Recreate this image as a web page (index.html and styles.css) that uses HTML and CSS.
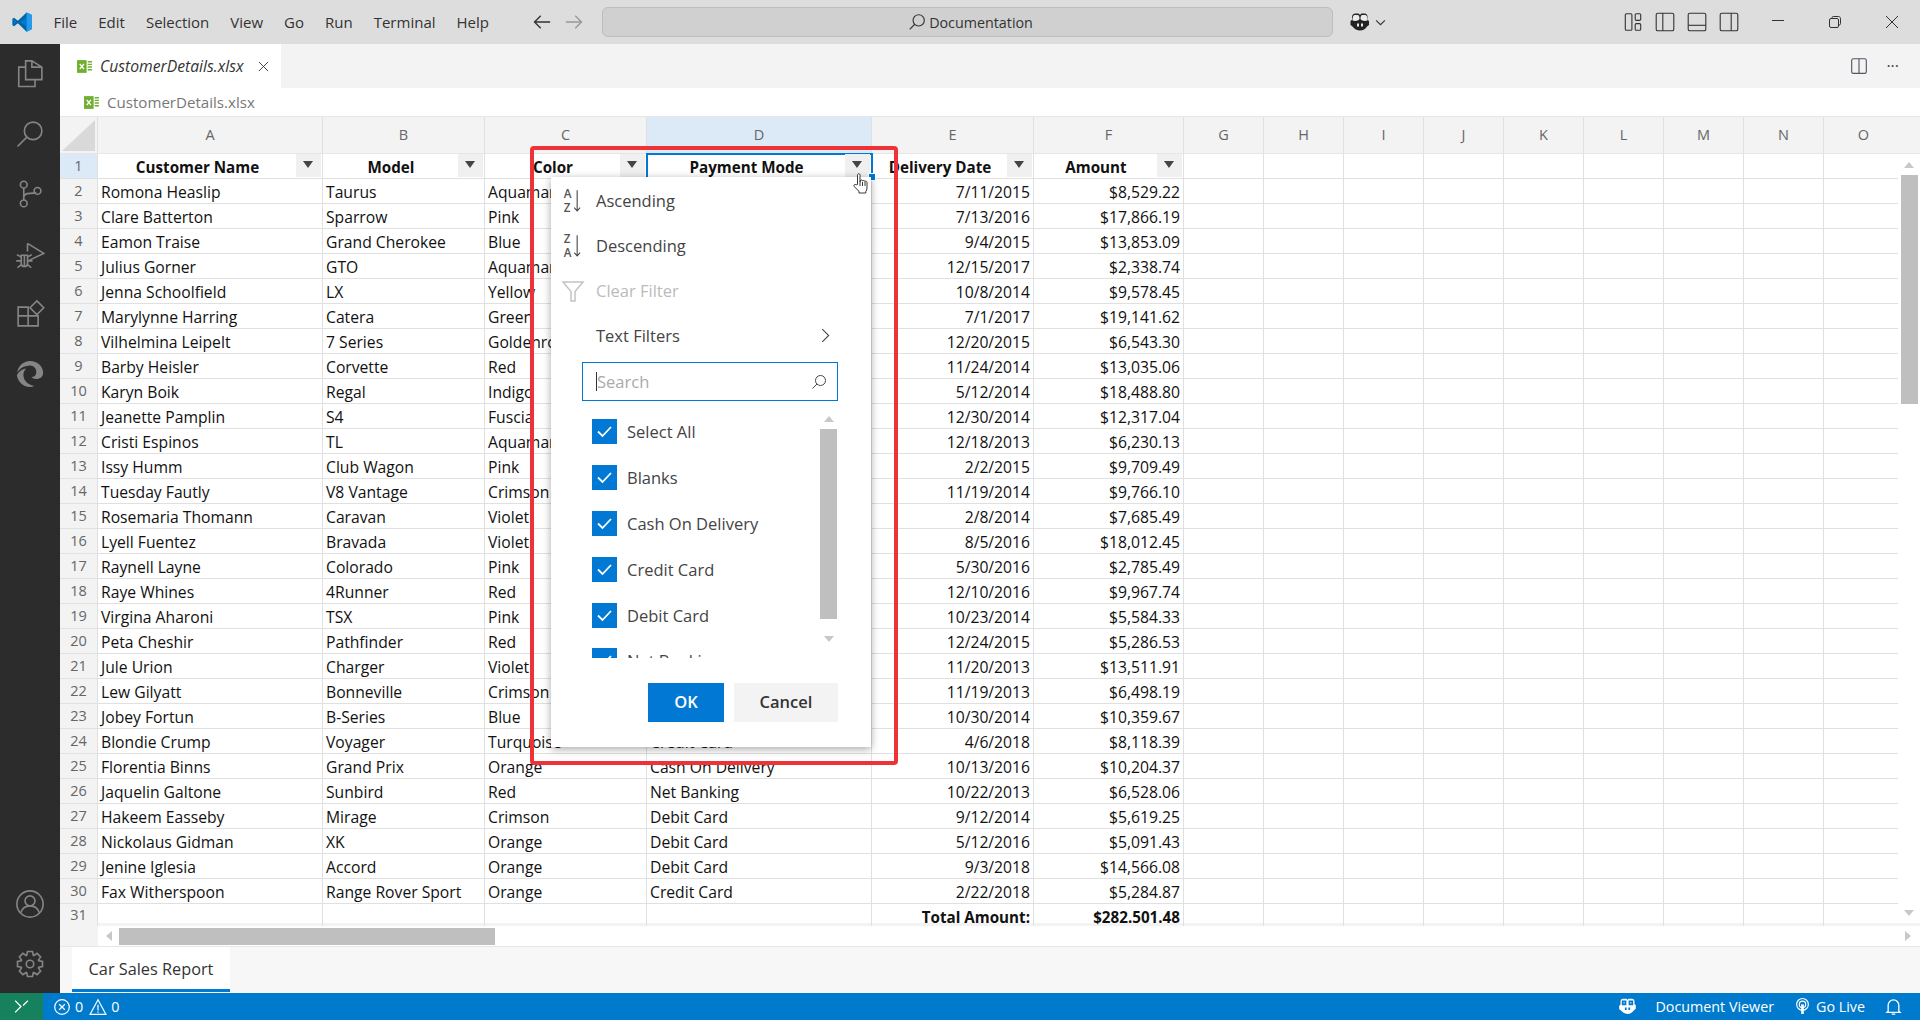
FILE: index.html
```html
<!DOCTYPE html>
<html lang="en">
<head>
    <meta charset="UTF-8">
    <title>CustomerDetails.xlsx</title>
    <link rel="stylesheet" href="styles.css">
</head>
<body>
<div class="app">
    <div class="titlebar">
        <svg class="logo" viewBox="0 0 24 24"><path fill="#0065a9" d="M17 1.500 22.500 4v16L17 22.500 7.500 13.400 3.400 16.600 1.500 15.600V8.400l1.900-1 4.100 3.200z"/><path fill="#007acc" d="M17 7.200 10.400 12 17 16.800zM3.400 9.300V14.700L6 12z"/><path fill="#1f9cf0" d="M17 1.500 22.500 4v16L17 22.500z"/></svg>
        <div class="menu"><span>File</span><span>Edit</span><span>Selection</span><span>View</span><span>Go</span><span>Run</span><span>Terminal</span><span>Help</span></div>
        <div class="nav">
            <svg viewBox="0 0 16 16"><path d="M14.500 8H2M7 3 2 8l5 5"/></svg>
            <svg class="off" viewBox="0 0 16 16"><path d="M1.500 8H14M9 3l5 5-5 5"/></svg>
        </div>
        <div class="command">
            <svg viewBox="0 0 16 16"><circle cx="9.500" cy="6.500" r="5"/><path d="M6 10 1.500 14.500"/></svg>
            <span>Documentation</span>
        </div>
        <div class="copilot">
            <svg viewBox="0 0 24 24"><path class="cp" d="M7.500 3.500h2.300c1 0 1.700.6 2.200 1.500.5-.9 1.200-1.500 2.200-1.500h2.300c2 0 3 1.300 3 3.200v3l1.500 1.300v4l-2 1.500C17.500 19 15 20.500 12 20.500S6.500 19 4.500 16.500l-2-1.500v-4L4 9.700v-3c0-1.900 1.500-3.200 3.500-3.200z"/><path class="cp-eye" d="M4.500 10.500c2 .8 5.500.8 7-1.500 0-2.500-.5-4-2-4H7C5.500 5 4.500 6.500 4.500 10.500zM19.500 10.500c-2 .8-5.500.8-7-1.500 0-2.500.5-4 2-4H17c1.500 0 2.500 1.500 2.500 5.500z"/><path class="cp-dot" d="M10 13.500v3M14 13.500v3"/></svg>
            <svg class="chev" viewBox="0 0 10 10"><path d="M1 3l4 4 4-4"/></svg>
        </div>
        <div class="layouts">
            <svg viewBox="0 0 20 20"><rect x="3" y="2.500" width="6" height="15" rx="1"/><rect x="12" y="2.500" width="5" height="6" rx="1"/><rect x="12" y="11.500" width="5" height="6" rx="1"/></svg>
            <svg viewBox="0 0 20 20"><rect x="2" y="2" width="16" height="16" rx="1.500"/><path d="M8 2v16"/></svg>
            <svg viewBox="0 0 20 20"><rect x="2" y="2" width="16" height="16" rx="1.500"/><path d="M2 13h16"/></svg>
            <svg viewBox="0 0 20 20"><rect x="2" y="2" width="16" height="16" rx="1.500"/><path d="M12 2v16"/></svg>
        </div>
        <div class="winbtns">
            <svg viewBox="0 0 14 14"><path d="M1 5.500h12"/></svg>
            <svg viewBox="0 0 14 14"><rect x="1.500" y="3.500" width="9" height="9" rx="1.500"/><path d="M4 3.500V2.800c0-.8.600-1.300 1.300-1.300h5.200c1.200 0 2 .8 2 2v5.200c0 .7-.5 1.300-1.300 1.300h-.7"/></svg>
            <svg viewBox="0 0 14 14"><path d="M1 1l12 12M13 1 1 13"/></svg>
        </div>
    </div>

    <div class="main">
        <div class="activity">
            <svg viewBox="0 0 24 24"><path d="M13.500 1.500H8.500v5H3v15.500h13v-5.500h5.500V6.500zM8.500 6.500v10H16M13.500 1.500v5h8"/></svg>
            <svg viewBox="0 0 24 24"><circle cx="14.500" cy="9.500" r="7"/><path d="M9.500 14.500 2 22"/></svg>
            <svg viewBox="0 0 24 24"><circle cx="7" cy="4.500" r="2.700"/><circle cx="7" cy="19.500" r="2.700"/><circle cx="18" cy="9.500" r="2.700"/><path d="M7 7.200v9.600M7 15c0-2.500 2-3.500 5-3.500 2.500 0 4-.3 5-.7"/></svg>
            <svg viewBox="0 0 24 24"><path d="M10 3.500 23 11.500 10.500 17.500M10 3.500V10"/><path d="M5 13h5v6.500a2.500 2.500 0 0 1-5 0zM7.500 13v9M1.500 12.500 5 14.500M13.500 12.500 10 14.500M1 17.500h4M10 17.500h4M2 23l3-2.500M13 23l-3-2.500"/></svg>
            <svg viewBox="0 0 24 24"><path d="M2.500 6.500h8v7h-8zM2.500 13.500h8v8h-8zM10.500 13.500h8v8h-8z"/><path d="M17.500 1.500 23 7l-5.500 5.500L12 7z"/></svg>
            <svg class="solid" viewBox="0 0 24 24"><path d="M12 1.500c6 0 10.500 4.300 10.500 9.500 0 3.300-2.500 5-5.300 5-2 0-3.500-.8-3.900-1.600 2.300-.2 3.700-1.700 3.700-3.900C17 6.800 14.300 5.200 11 5.300 7.400 5.400 4 7.300 1.700 10.700 2.600 5.500 6.600 1.500 12 1.500zM1.500 13c1.700-3.200 4.400-5.200 7.300-5.200-1.700 1.500-2.600 4-1.800 7 .9 3.500 4 6 8.500 6.700-1.200.5-2.300.8-3.500.8-5.600 0-9.700-4.100-10.500-9.300z"/></svg>
            <div class="activity-gap"></div>
            <svg viewBox="0 0 24 24"><circle cx="12" cy="12" r="10.500"/><circle cx="12" cy="9.500" r="4"/><path d="M4.500 19c1.200-3.300 4-5.500 7.500-5.500s6.300 2.200 7.500 5.500"/></svg>
            <svg viewBox="0 0 24 24"><path d="M10 2 14 2 14.600 5 15.110 5.210 17.660 3.510 20.490 6.340 18.790 8.890 19 9.400 22 10 22 14 19 14.600 18.790 15.110 20.490 17.660 17.660 20.490 15.110 18.790 14.600 19 14 22 10 22 9.400 19 8.890 18.790 6.340 20.490 3.510 17.660 5.210 15.110 5 14.600 2 14 2 10 5 9.400 5.210 8.890 3.510 6.340 6.340 3.510 8.890 5.210 9.400 5z"/><circle cx="12" cy="12" r="3"/></svg>
        </div>

        <div class="editor">
            <div class="tabs">
                <div class="tab">
                    <svg class="xl" viewBox="0 0 16 16"><rect x="1" y="2" width="9" height="12" fill="#6fae2e"/><path d="M3.500 5.500l4 5M7.500 5.500l-4 5" stroke="#fff" stroke-width="1.300"/><path d="M11 3.500h4M11 6h4M11 8.500h4M11 11h4" stroke="#6fae2e" stroke-width="1.300"/></svg>
                    <em>CustomerDetails.xlsx</em>
                    <svg class="tab-close" viewBox="0 0 12 12"><path d="M1 1l10 10M11 1 1 11"/></svg>
                </div>
                <div class="tab-actions">
                    <svg viewBox="0 0 16 16"><rect x="1.500" y="1.500" width="13" height="13" rx="1.500"/><path d="M8 1.500v13"/></svg>
                    <span class="dots">···</span>
                </div>
            </div>
            <div class="crumb">
                <svg class="xl" viewBox="0 0 16 16"><rect x="1" y="2" width="9" height="12" fill="#6fae2e"/><path d="M3.500 5.500l4 5M7.500 5.500l-4 5" stroke="#fff" stroke-width="1.300"/><path d="M11 3.500h4M11 6h4M11 8.500h4M11 11h4" stroke="#6fae2e" stroke-width="1.300"/></svg>
                <span>CustomerDetails.xlsx</span>
            </div>

            <div class="sheet">
                <div class="grid">
                    <div class="row colhead">
                        <div class="corner"><i></i></div>
                        <div class="c">A</div><div class="c">B</div><div class="c">C</div><div class="c on">D</div><div class="c">E</div><div class="c">F</div>
                        <div class="letters"><span>G</span><span>H</span><span>I</span><span>J</span><span>K</span><span>L</span><span>M</span><span>N</span><span>O</span></div>
                    </div>
                    <div class="row head">
                        <div class="rh on">1</div>
                        <div class="c">Customer Name<b class="fbtn"></b></div>
                        <div class="c">Model<b class="fbtn"></b></div>
                        <div class="c">Color<b class="fbtn"></b></div>
                        <div class="c sel">Payment Mode<b class="fbtn"></b><u class="handle"></u></div>
                        <div class="c">Delivery Date<b class="fbtn"></b></div>
                        <div class="c">Amount<b class="fbtn"></b></div>
                        <div class="fill"></div>
                    </div>
                    <div class="row"><div class="rh">2</div><div class="c">Romona Heaslip</div><div class="c">Taurus</div><div class="c">Aquamarine</div><div class="c"></div><div class="c r">7/11/2015</div><div class="c r">$8,529.22</div><div class="fill"></div></div>
                    <div class="row"><div class="rh">3</div><div class="c">Clare Batterton</div><div class="c">Sparrow</div><div class="c">Pink</div><div class="c"></div><div class="c r">7/13/2016</div><div class="c r">$17,866.19</div><div class="fill"></div></div>
                    <div class="row"><div class="rh">4</div><div class="c">Eamon Traise</div><div class="c">Grand Cherokee</div><div class="c">Blue</div><div class="c"></div><div class="c r">9/4/2015</div><div class="c r">$13,853.09</div><div class="fill"></div></div>
                    <div class="row"><div class="rh">5</div><div class="c">Julius Gorner</div><div class="c">GTO</div><div class="c">Aquamarine</div><div class="c"></div><div class="c r">12/15/2017</div><div class="c r">$2,338.74</div><div class="fill"></div></div>
                    <div class="row"><div class="rh">6</div><div class="c">Jenna Schoolfield</div><div class="c">LX</div><div class="c">Yellow</div><div class="c"></div><div class="c r">10/8/2014</div><div class="c r">$9,578.45</div><div class="fill"></div></div>
                    <div class="row"><div class="rh">7</div><div class="c">Marylynne Harring</div><div class="c">Catera</div><div class="c">Green</div><div class="c"></div><div class="c r">7/1/2017</div><div class="c r">$19,141.62</div><div class="fill"></div></div>
                    <div class="row"><div class="rh">8</div><div class="c">Vilhelmina Leipelt</div><div class="c">7 Series</div><div class="c">Goldenrod</div><div class="c"></div><div class="c r">12/20/2015</div><div class="c r">$6,543.30</div><div class="fill"></div></div>
                    <div class="row"><div class="rh">9</div><div class="c">Barby Heisler</div><div class="c">Corvette</div><div class="c">Red</div><div class="c"></div><div class="c r">11/24/2014</div><div class="c r">$13,035.06</div><div class="fill"></div></div>
                    <div class="row"><div class="rh">10</div><div class="c">Karyn Boik</div><div class="c">Regal</div><div class="c">Indigo</div><div class="c"></div><div class="c r">5/12/2014</div><div class="c r">$18,488.80</div><div class="fill"></div></div>
                    <div class="row"><div class="rh">11</div><div class="c">Jeanette Pamplin</div><div class="c">S4</div><div class="c">Fuscia</div><div class="c"></div><div class="c r">12/30/2014</div><div class="c r">$12,317.04</div><div class="fill"></div></div>
                    <div class="row"><div class="rh">12</div><div class="c">Cristi Espinos</div><div class="c">TL</div><div class="c">Aquamarine</div><div class="c"></div><div class="c r">12/18/2013</div><div class="c r">$6,230.13</div><div class="fill"></div></div>
                    <div class="row"><div class="rh">13</div><div class="c">Issy Humm</div><div class="c">Club Wagon</div><div class="c">Pink</div><div class="c"></div><div class="c r">2/2/2015</div><div class="c r">$9,709.49</div><div class="fill"></div></div>
                    <div class="row"><div class="rh">14</div><div class="c">Tuesday Fautly</div><div class="c">V8 Vantage</div><div class="c">Crimson</div><div class="c"></div><div class="c r">11/19/2014</div><div class="c r">$9,766.10</div><div class="fill"></div></div>
                    <div class="row"><div class="rh">15</div><div class="c">Rosemaria Thomann</div><div class="c">Caravan</div><div class="c">Violet</div><div class="c"></div><div class="c r">2/8/2014</div><div class="c r">$7,685.49</div><div class="fill"></div></div>
                    <div class="row"><div class="rh">16</div><div class="c">Lyell Fuentez</div><div class="c">Bravada</div><div class="c">Violet</div><div class="c"></div><div class="c r">8/5/2016</div><div class="c r">$18,012.45</div><div class="fill"></div></div>
                    <div class="row"><div class="rh">17</div><div class="c">Raynell Layne</div><div class="c">Colorado</div><div class="c">Pink</div><div class="c"></div><div class="c r">5/30/2016</div><div class="c r">$2,785.49</div><div class="fill"></div></div>
                    <div class="row"><div class="rh">18</div><div class="c">Raye Whines</div><div class="c">4Runner</div><div class="c">Red</div><div class="c"></div><div class="c r">12/10/2016</div><div class="c r">$9,967.74</div><div class="fill"></div></div>
                    <div class="row"><div class="rh">19</div><div class="c">Virgina Aharoni</div><div class="c">TSX</div><div class="c">Pink</div><div class="c"></div><div class="c r">10/23/2014</div><div class="c r">$5,584.33</div><div class="fill"></div></div>
                    <div class="row"><div class="rh">20</div><div class="c">Peta Cheshir</div><div class="c">Pathfinder</div><div class="c">Red</div><div class="c"></div><div class="c r">12/24/2015</div><div class="c r">$5,286.53</div><div class="fill"></div></div>
                    <div class="row"><div class="rh">21</div><div class="c">Jule Urion</div><div class="c">Charger</div><div class="c">Violet</div><div class="c"></div><div class="c r">11/20/2013</div><div class="c r">$13,511.91</div><div class="fill"></div></div>
                    <div class="row"><div class="rh">22</div><div class="c">Lew Gilyatt</div><div class="c">Bonneville</div><div class="c">Crimson</div><div class="c"></div><div class="c r">11/19/2013</div><div class="c r">$6,498.19</div><div class="fill"></div></div>
                    <div class="row"><div class="rh">23</div><div class="c">Jobey Fortun</div><div class="c">B-Series</div><div class="c">Blue</div><div class="c"></div><div class="c r">10/30/2014</div><div class="c r">$10,359.67</div><div class="fill"></div></div>
                    <div class="row"><div class="rh">24</div><div class="c">Blondie Crump</div><div class="c">Voyager</div><div class="c">Turquoise</div><div class="c">Credit Card</div><div class="c r">4/6/2018</div><div class="c r">$8,118.39</div><div class="fill"></div></div>
                    <div class="row"><div class="rh">25</div><div class="c">Florentia Binns</div><div class="c">Grand Prix</div><div class="c">Orange</div><div class="c">Cash On Delivery</div><div class="c r">10/13/2016</div><div class="c r">$10,204.37</div><div class="fill"></div></div>
                    <div class="row"><div class="rh">26</div><div class="c">Jaquelin Galtone</div><div class="c">Sunbird</div><div class="c">Red</div><div class="c">Net Banking</div><div class="c r">10/22/2013</div><div class="c r">$6,528.06</div><div class="fill"></div></div>
                    <div class="row"><div class="rh">27</div><div class="c">Hakeem Easseby</div><div class="c">Mirage</div><div class="c">Crimson</div><div class="c">Debit Card</div><div class="c r">9/12/2014</div><div class="c r">$5,619.25</div><div class="fill"></div></div>
                    <div class="row"><div class="rh">28</div><div class="c">Nickolaus Gidman</div><div class="c">XK</div><div class="c">Orange</div><div class="c">Debit Card</div><div class="c r">5/12/2016</div><div class="c r">$5,091.43</div><div class="fill"></div></div>
                    <div class="row"><div class="rh">29</div><div class="c">Jenine Iglesia</div><div class="c">Accord</div><div class="c">Orange</div><div class="c">Debit Card</div><div class="c r">9/3/2018</div><div class="c r">$14,566.08</div><div class="fill"></div></div>
                    <div class="row"><div class="rh">30</div><div class="c">Fax Witherspoon</div><div class="c">Range Rover Sport</div><div class="c">Orange</div><div class="c">Credit Card</div><div class="c r">2/22/2018</div><div class="c r">$5,284.87</div><div class="fill"></div></div>
                    <div class="row last"><div class="rh">31</div><div class="c"></div><div class="c"></div><div class="c"></div><div class="c"></div><div class="c r bold">Total Amount:</div><div class="c r bold">$282.501.48</div><div class="fill"></div></div>
                </div>
                <div class="vscroll">
                    <div class="vhead"></div>
                    <div class="varrow"><i class="tri-up"></i></div>
                    <div class="vthumb"></div>
                    <div class="vgap"></div>
                    <div class="varrow"><i class="tri-down"></i></div>
                </div>
            </div>

            <div class="hscroll">
                <div class="hleft"></div>
                <div class="htrack">
                    <i class="tri-left"></i>
                    <div class="hthumb"></div>
                    <div class="vgap"></div>
                    <i class="tri-right"></i>
                </div>
            </div>
            <div class="sheettabs"><div class="sheettab">Car Sales Report</div></div>
        </div>
    </div>

    <div class="status">
        <div class="remote"><svg viewBox="0 0 16 16"><path d="M2 13.500 7.500 8 2 2.500M14 2.500 9.500 7"/></svg></div>
        <div class="problems">
            <svg viewBox="0 0 16 16"><circle cx="8" cy="8" r="6.500"/><path d="M5.500 5.500l5 5M10.500 5.500l-5 5"/></svg><span>0</span>
            <svg viewBox="0 0 16 16"><path d="M8 1.500 15 14.500H1zM8 6v5M8 12v1.200"/></svg><span>0</span>
        </div>
        <div class="status-right">
            <svg viewBox="0 0 24 24"><path fill="#fff" d="M7 3h3.200c1 0 1.800.8 1.800 1.800 0-1 .8-1.800 1.800-1.800H17c2 0 3 1.300 3 3.200v3l1.500 1.500v4l-2 1.500C17.500 19 15 20.500 12 20.500S6.500 19 4.500 16.700l-2-1.500v-4L4 9.700V6.200C4 4.300 5 3 7 3z"/><path stroke="#007acc" stroke-width="2" fill="none" d="M6.500 6h3.200v3.500H6.500zM14.300 6h3.200v3.500h-3.200zM10 13v3M14 13v3"/></svg>
            <span class="st-doc">Document Viewer</span>
            <svg class="st-live" viewBox="0 0 16 16"><circle cx="8" cy="6" r="5.500"/><circle cx="8" cy="6" r="3"/><path d="M8 6v9" stroke-width="2.500"/></svg>
            <span class="st-go">Go Live</span>
            <svg class="st-bell" viewBox="0 0 16 16"><path d="M3.500 12V7a4.500 4.500 0 0 1 9 0v5l1 1h-11zM6.500 14.500h3"/></svg>
        </div>
    </div>

    <!-- filter popup and annotation sit over the grid -->
    <div class="popup">
        <div class="pop-item">
            <svg class="sort" viewBox="0 -3 24 36"><text x="1" y="11">A</text><text x="1" y="28">Z</text><path d="M17 2v24M13.500 23l3.500 4 3.500-4" /></svg>
            <span>Ascending</span>
        </div>
        <div class="pop-item">
            <svg class="sort" viewBox="0 -3 24 36"><text x="1" y="11">Z</text><text x="1" y="28">A</text><path d="M17 2v24M13.500 23l3.500 4 3.500-4"/></svg>
            <span>Descending</span>
        </div>
        <div class="pop-item off">
            <svg class="funnel" viewBox="0 0 24 24"><path d="M2 3h20l-8 9.500V22h-4v-9.500z"/></svg>
            <span>Clear Filter</span>
        </div>
        <div class="pop-item">
            <span>Text Filters</span>
            <svg class="arrow" viewBox="0 0 10 16"><path d="M2 2l6 6-6 6"/></svg>
        </div>
        <div class="search">
            <span class="caret"></span><span class="ph">Search</span>
            <svg viewBox="0 0 16 16"><circle cx="9.500" cy="6.500" r="5"/><path d="M6 10 1.500 14.500"/></svg>
        </div>
        <div class="list">
            <div class="items">
                <div class="item"><svg viewBox="0 0 25 25"><rect width="25" height="25"/><path d="M6 12.500l4.500 4.500 8.500-9"/></svg><span>Select All</span></div>
                <div class="item"><svg viewBox="0 0 25 25"><rect width="25" height="25"/><path d="M6 12.500l4.500 4.500 8.500-9"/></svg><span>Blanks</span></div>
                <div class="item"><svg viewBox="0 0 25 25"><rect width="25" height="25"/><path d="M6 12.500l4.500 4.500 8.500-9"/></svg><span>Cash On Delivery</span></div>
                <div class="item"><svg viewBox="0 0 25 25"><rect width="25" height="25"/><path d="M6 12.500l4.500 4.500 8.500-9"/></svg><span>Credit Card</span></div>
                <div class="item"><svg viewBox="0 0 25 25"><rect width="25" height="25"/><path d="M6 12.500l4.500 4.500 8.500-9"/></svg><span>Debit Card</span></div>
                <div class="item"><svg viewBox="0 0 25 25"><rect width="25" height="25"/><path d="M6 12.500l4.500 4.500 8.500-9"/></svg><span>Net Banking</span></div>
            </div>
            <div class="list-scroll">
                <div class="list-arrow"><i class="tri-up"></i></div>
                <div class="list-thumb"></div>
                <div class="list-arrow down"><i class="tri-down"></i></div>
            </div>
        </div>
        <div class="pop-btns"><span class="ok">OK</span><span class="cancel">Cancel</span></div>
    </div>
    <div class="redbox"></div>
    <svg class="hand" viewBox="0 0 16 24"><path d="M4.500 12.500V3.200c0-2 2.500-2 2.500 0V10l.3-1.200c.4-1.300 2.200-1.100 2.200.3l.3-.1c.5-1 2-.7 2 .5.700-.7 2.200-.4 2.200 1v5.500c0 1.500-.7 2.700-1.200 3.500V21H6v-1.800L1.200 14.600c-1-1.400.7-3 2-1.800z"/><path d="M7 10v4M9.500 10v4M12 10v4"/></svg>
</div>
</body>
</html>
```
FILE: styles.css
```css
*{
    margin:0;
    padding:0;
    box-sizing:border-box;
}
body{
    width:1920px;
    height:1020px;
    overflow:hidden;
    font-family:"Open Sans","Noto Sans",sans-serif;
    font-size:14px;
    color:#222;
    background:#fff;
}
svg{
    display:block;
    fill:none;
    stroke:currentColor;
}
.app{
    position:relative;
    display:flex;
    flex-direction:column;
    height:1020px;
}

/* title bar */
.titlebar{
    display:flex;
    align-items:center;
    height:44px;
    background:#ddd;
    color:#333;
}
.logo{
    width:22px;
    height:22px;
    margin-left:11px;
    stroke:none;
}
.menu{
    display:flex;
    margin-left:10px;
    font-size:15px;
}
.menu span{
    padding:0 10.500px;
}
.nav{
    display:flex;
    gap:12px;
    margin-left:33px;
}
.nav svg{
    width:20px;
    height:20px;
    stroke-width:1.100;
}
.nav .off{
    color:#999;
}
.command{
    position:absolute;
    left:602px;
    top:7px;
    display:flex;
    align-items:center;
    justify-content:center;
    gap:3px;
    width:731px;
    height:30px;
    padding-left:6px;
    background:#d0d0d0;
    border:1px solid #bdbdbd;
    border-radius:6px;
    font-size:14.300px;
}
.command svg{
    width:18px;
    height:18px;
    stroke-width:1;
}
.copilot{
    position:absolute;
    left:1348px;
    top:10px;
    display:flex;
    align-items:center;
}
.copilot svg{
    width:24px;
    height:24px;
}
.cp{
    fill:#222;
    stroke:none;
}
.cp-eye{
    fill:#ececec;
    stroke:none;
}
.cp-dot{
    stroke:#ececec;
    stroke-width:2;
}
.copilot .chev{
    width:11px;
    height:11px;
    margin-left:3px;
    stroke-width:1;
}
.layouts{
    display:flex;
    gap:10px;
    margin-left:auto;
    margin-right:31px;
}
.layouts svg{
    width:22px;
    height:22px;
    stroke-width:1;
}
.winbtns{
    display:flex;
    gap:43px;
    margin-right:21px;
}
.winbtns svg{
    width:14px;
    height:14px;
    stroke-width:1;
}

/* main */
.main{
    display:flex;
    height:949px;
}
.activity{
    display:flex;
    flex-direction:column;
    align-items:center;
    gap:30.200px;
    width:60px;
    padding:14.500px 0 14px;
    background:#2c2c2c;
    color:#858585;
}
.activity svg{
    flex:none;
    width:30px;
    height:30px;
    stroke-width:1.300;
}
.activity .solid{
    fill:#858585;
    stroke:none;
}
.activity-gap{
    flex:1;
}
.editor{
    display:flex;
    flex-direction:column;
    width:1860px;
}
.tabs{
    display:flex;
    justify-content:space-between;
    height:44px;
    background:#f3f3f3;
}
.tab{
    display:flex;
    align-items:center;
    width:221px;
    padding-left:16px;
    background:#fff;
    color:#333;
}
.xl{
    width:17px;
    height:17px;
    stroke:none;
}
.tab em{
    margin-left:7px;
    font-size:15.700px;
    white-space:nowrap;
}
.tab-close{
    flex:none;
    width:11px;
    height:11px;
    margin-left:15px;
    stroke-width:1;
}
.tab-actions{
    display:flex;
    align-items:center;
    gap:18px;
    padding-right:21px;
    color:#444;
}
.tab-actions svg{
    width:18px;
    height:20px;
    stroke-width:1;
    color:#556;
}
.dots{
    font-size:16px;
}
.crumb{
    display:flex;
    align-items:center;
    gap:7px;
    height:28px;
    padding-left:23px;
    color:#777;
    font-size:15.100px;
}

/* sheet */
.sheet{
    display:flex;
    height:810px;
}
.grid{
    width:1838px;
    overflow:hidden;
    font-size:15.700px;
    color:#111;
}
.row{
    display:grid;
    grid-template-columns:38px 225px 162px 162px 225px 162px 150px 714px;
    height:25px;
    border-bottom:1px solid #e0e0e0;
}
.row .c{
    position:relative;
    padding:2px 3px 0;
    line-height:22px;
    white-space:nowrap;
    overflow:hidden;
    border-right:1px solid #e0e0e0;
}
.row .r{
    text-align:right;
}
.row .bold{
    font-size:15.200px;
    font-weight:bold;
    overflow:visible;
}
.rh{
    background:#f3f3f3;
    color:#666;
    font-size:14.500px;
    text-align:center;
    line-height:24px;
    border-right:1px solid #e0e0e0;
}
.rh.on,
.colhead .on{
    background:#dce9f6;
}
.fill{
    background:repeating-linear-gradient(to right,transparent 0,transparent 79px,#e0e0e0 79px,#e0e0e0 80px);
}
.row.colhead{
    height:38px;
    background:#f3f3f3;
    color:#666;
    font-size:14.500px;
    border-bottom:1px solid #e6e6e6;
    border-top:1px solid #e6e6e6;
}
.row.colhead .c{
    padding:0;
    text-align:center;
    line-height:36px;
}
.corner{
    display:flex;
    align-items:flex-end;
    justify-content:flex-end;
    border-right:1px solid #e0e0e0;
    background:#f3f3f3;
}
.corner i{
    width:33px;
    height:31px;
    margin:0 2px 2px 0;
    background:linear-gradient(to bottom right,transparent 49%,#d9d9d9 51%);
}
.letters{
    display:flex;
}
.letters span{
    flex:none;
    width:80px;
    text-align:center;
    line-height:36px;
    border-right:1px solid #e0e0e0;
}
.row.head .c{
    padding:2px 25px 0 0;
    font-size:15.200px;
    font-weight:bold;
    text-align:center;
    overflow:visible;
}
.fbtn{
    position:absolute;
    right:1px;
    top:0;
    width:25px;
    height:23px;
    background:#f0f0f0;
}
.fbtn::after{
    content:"";
    position:absolute;
    left:7px;
    top:7px;
    border-left:5px solid transparent;
    border-right:5px solid transparent;
    border-top:7px solid #444;
}
.head .sel{
    outline:2px solid #0078d4;
    outline-offset:-1px;
    z-index:1;
}
.handle{
    position:absolute;
    right:-5px;
    bottom:-3px;
    width:8px;
    height:8px;
    background:#0078d4;
    border:1px solid #fff;
}
.row.last{
    height:22px;
    border-bottom:3px solid #f3f3f3;
}
.last .c{
    overflow:visible;
}
.last .rh{
    line-height:22px;
}

/* scrollbars */
.vscroll{
    display:flex;
    flex-direction:column;
    flex:1;
    align-items:center;
    border-bottom:3px solid #f3f3f3;
}
.vhead{
    width:100%;
    height:38px;
    background:#f3f3f3;
    border-top:1px solid #e6e6e6;
    border-bottom:1px solid #e6e6e6;
    flex:none;
}
.varrow{
    display:flex;
    align-items:center;
    justify-content:center;
    flex:none;
    height:21px;
}
.vthumb{
    flex:none;
    width:17px;
    height:229px;
    background:#bfbfbf;
}
.vgap{
    flex:1;
}
.tri-up,
.tri-down,
.tri-left,
.tri-right{
    display:block;
    width:0;
    height:0;
}
.tri-up{
    border-left:5px solid transparent;
    border-right:5px solid transparent;
    border-bottom:6px solid #c8c8c8;
}
.tri-down{
    border-left:5px solid transparent;
    border-right:5px solid transparent;
    border-top:6px solid #c8c8c8;
}
.tri-left{
    border-top:5px solid transparent;
    border-bottom:5px solid transparent;
    border-right:6px solid #c8c8c8;
}
.tri-right{
    border-top:5px solid transparent;
    border-bottom:5px solid transparent;
    border-left:6px solid #c8c8c8;
}
.hscroll{
    display:flex;
    height:21px;
    border-bottom:1px solid #e6e6e6;
}
.hleft{
    width:38px;
    background:#f3f3f3;
}
.htrack{
    display:flex;
    align-items:center;
    flex:1;
    padding:0 9px 0 8px;
    background:#fff;
}
.hthumb{
    width:376px;
    height:17px;
    margin-left:7px;
    background:#bfbfbf;
}
.sheettabs{
    flex:1;
    padding-left:12px;
    background:#f7f7f7;
}
.sheettab{
    width:158px;
    height:45px;
    padding-top:11px;
    text-align:center;
    font-size:16.300px;
    background:#fff;
    color:#333;
    border-bottom:3px solid #0078d4;
}

/* status bar */
.status{
    display:flex;
    align-items:center;
    height:27px;
    background:#007acc;
    color:#fff;
    font-size:14.300px;
}
.remote{
    display:flex;
    align-items:center;
    justify-content:center;
    width:43px;
    height:27px;
    background:#16825d;
}
.remote svg{
    width:17px;
    height:17px;
    stroke-width:1.200;
}
.problems{
    display:flex;
    align-items:center;
    gap:4px;
    margin-left:10px;
}
.problems svg{
    width:18px;
    height:18px;
    stroke-width:1.100;
}
.problems span{
    margin-right:2px;
}
.status-right{
    display:flex;
    align-items:center;
    margin-left:auto;
}
.status-right svg{
    width:21px;
    height:21px;
    stroke:none;
}
.st-doc{
    margin-left:18px;
}
.status-right .st-live{
    width:17px;
    height:21px;
    margin-left:20px;
    stroke:#fff;
    stroke-width:1.100;
}
.st-go{
    margin-left:5px;
}
.status-right .st-bell{
    width:19px;
    height:21px;
    margin-left:19px;
    margin-right:17px;
    stroke:#fff;
    stroke-width:1.100;
}

/* filter popup */
.popup{
    position:absolute;
    left:551px;
    top:177px;
    width:320px;
    height:570px;
    padding-top:1px;
    background:#fff;
    box-shadow:0 2px 8px rgba(0,0,0,.35);
    font-size:16.500px;
    color:#444;
    z-index:5;
}
.pop-item{
    position:relative;
    display:flex;
    align-items:center;
    height:45px;
    padding-left:45px;
}
.pop-item.off{
    color:#bbb;
}
.pop-item svg{
    position:absolute;
}
.sort{
    left:12px;
    width:20px;
    height:30px;
    stroke:#444;
    stroke-width:1.300;
}
.sort text{
    font-size:14px;
    font-weight:600;
    fill:#555;
    stroke:none;
}
.funnel{
    left:10px;
    width:24px;
    height:24px;
    stroke:#c4c4c4;
    stroke-width:1.500;
}
.arrow{
    right:40px;
    width:11px;
    height:17px;
    stroke:#444;
    stroke-width:1;
}
.search{
    display:flex;
    align-items:center;
    width:256px;
    height:39px;
    margin:4px 0 0 31px;
    padding:0 10px 0 13px;
    border:1px solid #0078d4;
    color:#aaa;
}
.caret{
    width:1px;
    height:19px;
    background:#333;
}
.ph{
    flex:1;
}
.search svg{
    width:16px;
    height:16px;
    color:#444;
    stroke-width:1;
}
.list{
    display:flex;
    height:249px;
    margin:8px 0 0 31px;
    width:255px;
}
.items{
    flex:1;
    overflow:hidden;
    padding-left:10px;
}
.item{
    display:flex;
    align-items:center;
    height:45.800px;
}
.item svg{
    width:25px;
    height:25px;
    flex:none;
    margin-right:10px;
    stroke:#fff;
    stroke-width:1.800;
}
.item rect{
    fill:#0078d4;
    stroke:none;
}
.list-scroll{
    position:relative;
    display:flex;
    flex-direction:column;
    align-items:center;
    width:17px;
}
.list-arrow{
    display:flex;
    align-items:center;
    justify-content:center;
    height:20px;
    flex:none;
}
.list-arrow.down{
    height:39px;
}
.list-thumb{
    width:17px;
    height:190px;
    flex:none;
    background:#bfbfbf;
}
.pop-btns{
    display:flex;
    justify-content:flex-end;
    gap:10px;
    margin-top:25px;
    padding-right:33px;
}
.pop-btns span{
    height:39px;
    line-height:38px;
    text-align:center;
    font-weight:600;
}
.ok{
    width:76px;
    background:#0078d4;
    color:#fff;
}
.cancel{
    width:104px;
    background:#f3f3f3;
    color:#333;
}
.redbox{
    position:absolute;
    left:530px;
    top:146px;
    width:368px;
    height:619px;
    border:4px solid #ee3338;
    border-radius:4px;
    z-index:6;
}
.hand{
    position:absolute;
    left:853px;
    top:172px;
    width:16px;
    height:24px;
    fill:#fff;
    stroke:#222;
    stroke-width:.9;
    z-index:7;
}
```
